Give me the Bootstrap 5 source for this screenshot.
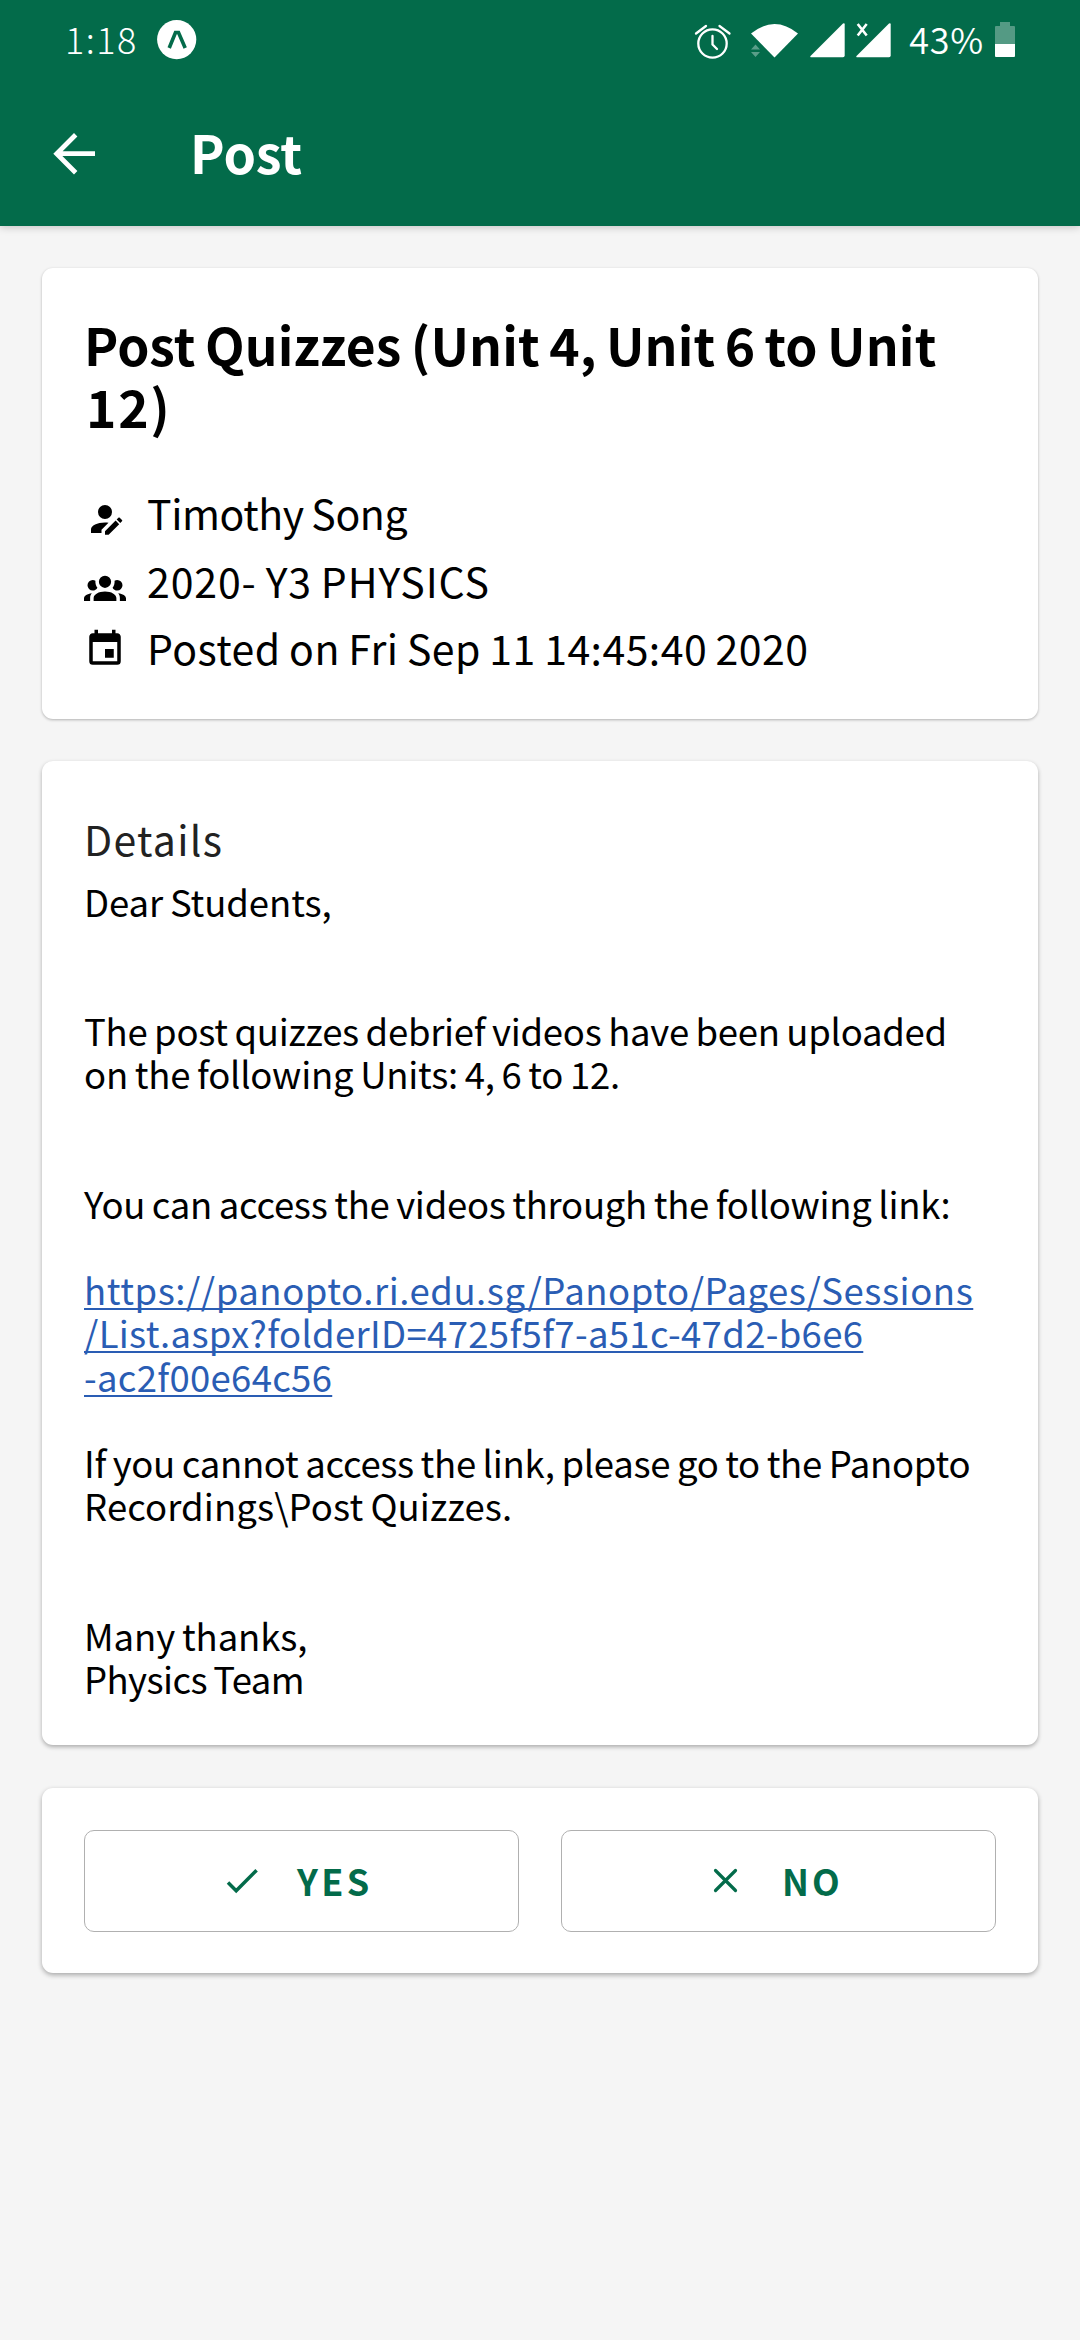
<!DOCTYPE html>
<html lang="en">
<head>
<meta charset="utf-8">
<meta name="viewport" content="width=device-width, initial-scale=1">
<title>Post</title>
<link href="https://cdn.jsdelivr.net/npm/bootstrap@5.3.0/dist/css/bootstrap.min.css" rel="stylesheet">
<style>
body{background:#f5f5f5;color:#000;font-family:"Noto Sans CJK SC","Noto Sans",sans-serif;width:1080px;min-height:2340px}
svg{display:block;flex:none}
.topbar{background:#036b4a;height:226px;box-shadow:0 1px 8px rgba(0,0,0,.22)}
.statusline{height:80px;padding:0 65px 0 65px;font-size:36px;line-height:76px;font-weight:300}
.clock{letter-spacing:1.5px;width:92px}
.charge{letter-spacing:.8px;margin:0 11px 0 17px;font-weight:350}
.titleline{height:146px;padding:0 0 0 53px}
.titleline svg{margin-top:53px}
.app-title{font-size:52px;font-weight:700;line-height:144px;margin:0 0 0 95px;letter-spacing:0}
.page{padding:42px}
.panel{border:0;border-radius:11px;background:#fff;box-shadow:0 1px 3px rgba(0,0,0,.28);padding:0 42px;margin-bottom:42px}
.panel-head{height:451px;padding-top:45px}
.panel-body{height:984px;padding-top:47px;margin-bottom:43px;box-shadow:0 2px 4px rgba(0,0,0,.3)}
.panel-actions{height:185px;padding-top:42px;box-shadow:0 2px 5px rgba(0,0,0,.32)}
.post-title{font-size:51.5px;line-height:62px;font-weight:700;margin:0 0 41px;white-space:nowrap;word-spacing:-2.5px;letter-spacing:.14px}
.title-end{letter-spacing:1.8px;padding-left:2px}
.meta-row{height:67.5px;font-size:41px;line-height:68px;gap:21px;white-space:nowrap;word-spacing:-1.2px}
.meta-row svg{margin-top:20px}
.meta-row:last-child svg{margin-top:15px}
.author{letter-spacing:-.4px}
.group-name{letter-spacing:.9px}
.posted{letter-spacing:.45px}
.details-h{font-size:41px;line-height:60px;font-weight:400;color:#222;margin:0 0 12px;letter-spacing:1.3px}
.message{font-size:36.500px;line-height:43.1px;white-space:pre;word-spacing:-1.2px;letter-spacing:-.28px}
.spaced{letter-spacing:-.1px}
.units{letter-spacing:-.22px}
.folder{letter-spacing:.1px}
.tight{letter-spacing:-.6px}
.msg-link{display:block;color:#2a5db4;word-spacing:0;text-decoration:underline;text-decoration-thickness:2px;text-underline-offset:3px;text-decoration-skip-ink:none;line-height:43px}
.url-a{letter-spacing:.54px}
.url-b{letter-spacing:.32px;margin-bottom:1px}
.url-c{letter-spacing:.3px;margin-bottom:.4px}
.answer-row{gap:42px}
.answer{height:102px;width:435px;flex:none;border:1px solid #b0b0b0;border-radius:10px;background:#fff;color:#036b4a;font-size:36px;font-weight:700;line-height:99px;padding:0}
.answer svg{margin-top:29px}
.answer-yes{padding-left:137px;letter-spacing:3.4px}
.answer-no{padding-left:145px;letter-spacing:3px}
.answer span{margin-left:33px}
</style>
<script src="https://cdn.jsdelivr.net/npm/bootstrap@5.3.0/dist/js/bootstrap.bundle.min.js"></script>
</head>
<body>
<header class="topbar text-white">
  <div class="statusline d-flex">
    <span class="clock">1:18</span>
    <svg width="40" height="80" viewBox="157 0 40 80"><circle cx="176.7" cy="39.6" r="19.6" fill="#fff"/><path d="M169.200 48L175.500 32.500H178.500L185.200 48" fill="none" stroke="#036b4a" stroke-width="3.600"/></svg>
    <svg class="ms-auto" width="198" height="80" viewBox="693 0 198 80" fill="#fff">
      <g fill="none" stroke="#fff" stroke-width="2.300" stroke-linecap="round" stroke-linejoin="round"><circle cx="711.500" cy="43.500" r="14.200"/><path d="M711.500 36V44.500L716 49M695 33.500L705 26M718.500 26L728.500 33.500"/></g>
      <path d="M750 33.500Q773.500 14.500 797 33.500L773.500 57.500Z"/>
      <path d="M750 49.500L754.500 44.500L759 49.500ZM750 52L754.500 57L759 52Z" opacity=".35"/>
      <path d="M809.500 56L842 23.500Q843.700 22.500 843.700 24.500V55.500Q843.700 57.300 842 57.300H810Q808.500 57.300 809.500 56Z"/>
      <path d="M855.500 56L888 23.500Q889.700 22.500 889.700 24.500V55.500Q889.700 57.300 888 57.300H856Q854.500 57.300 855.500 56Z"/>
      <path d="M856.700 24L865.700 35.500M865.700 24L856.700 35.500" fill="none" stroke="#fff" stroke-width="2.600"/>
    </svg>
    <span class="charge">43%</span>
    <svg width="20" height="80" viewBox="0 0 20 80"><path d="M1 26H5V22H15V26H19Q20 26 20 27V44H0V27Q0 26 1 26Z" fill="#fff" opacity=".32"/><path d="M0 44H20V56Q20 57 19 57H1Q0 57 0 56Z" fill="#fff"/></svg>
  </div>
  <div class="titleline d-flex">
    <svg width="42" height="42" viewBox="0 0 42 42" fill="none" stroke="#fff" stroke-width="4.800"><path d="M42 20.700H4M22.700 1.700L3.700 20.700L22.700 39.700"/></svg>
    <h1 class="app-title">Post</h1>
  </div>
</header>
<main class="page">
  <section class="card panel panel-head">
    <h2 class="post-title">Post Quizzes (Unit 4, Unit 6 to Unit<br><span class="title-end">12)</span></h2>
    <div>
      <div class="meta-row d-flex">
        <svg width="42" height="42" viewBox="0 0 24 24"><path d="M21.700 13.350L20.700 14.350L18.650 12.300L19.650 11.300C19.860 11.080 20.210 11.080 20.420 11.300L21.700 12.580C21.910 12.790 21.910 13.140 21.700 13.350M12 18.940L18.070 12.880L20.120 14.930L14.060 21H12V18.940M12 14C7.580 14 4 15.790 4 18V20H10V18.110L14 14.110C13.340 14.030 12.670 14 12 14M12 4A4 4 0 0 0 8 8A4 4 0 0 0 12 12A4 4 0 0 0 16 8A4 4 0 0 0 12 4Z"/></svg>
        <span class="author">Timothy Song</span>
      </div>
      <div class="meta-row d-flex">
        <svg width="42" height="42" viewBox="0 0 24 24"><path d="M12 5.500A3.500 3.500 0 0 1 15.500 9A3.500 3.500 0 0 1 12 12.500A3.500 3.500 0 0 1 8.500 9A3.500 3.500 0 0 1 12 5.500M5 8C5.560 8 6.080 8.150 6.530 8.420C6.380 9.850 6.800 11.270 7.660 12.380C7.160 13.340 6.160 14 5 14A3 3 0 0 1 2 11A3 3 0 0 1 5 8M19 8A3 3 0 0 1 22 11A3 3 0 0 1 19 14C17.840 14 16.840 13.340 16.340 12.380C17.200 11.270 17.620 9.850 17.470 8.420C17.920 8.150 18.440 8 19 8M5.500 18.250C5.500 16.180 8.410 14.500 12 14.500C15.590 14.500 18.500 16.180 18.500 18.250V20H5.500V18.250M0 20V18.500C0 17.110 1.890 15.940 4.450 15.600C3.860 16.280 3.500 17.220 3.500 18.250V20H0M24 20H20.500V18.250C20.500 17.220 20.140 16.280 19.550 15.600C22.110 15.940 24 17.110 24 18.500V20Z"/></svg>
        <span class="group-name">2020- Y3 PHYSICS</span>
      </div>
      <div class="meta-row d-flex">
        <svg width="42" height="42" viewBox="0 0 24 24"><path d="M19 19H5V8H19M16 1V3H8V1H6V3H5C3.890 3 3 3.890 3 5V19A2 2 0 0 0 5 21H19A2 2 0 0 0 21 19V5C21 3.890 20.100 3 19 3H18V1M17 12H12V17H17V12Z"/></svg>
        <span class="posted">Posted on Fri Sep 11 14:45:40 2020</span>
      </div>
    </div>
  </section>
  <section class="card panel panel-body">
    <h3 class="details-h">Details</h3>
    <div class="message"><span class="spaced">Dear Students,</span>


The post quizzes debrief videos have been uploaded
<span class="units">on the following Units: 4, 6 to 12.</span>


You can access the videos through the following link:

<a class="msg-link url-a" href="#">https://panopto.ri.edu.sg/Panopto/Pages/Sessions</a><a class="msg-link url-b" href="#">/List.aspx?folderID=4725f5f7-a51c-47d2-b6e6</a><a class="msg-link url-c" href="#">-ac2f00e64c56</a>
If you cannot access the link, please go to the Panopto
<span class="folder">Recordings\Post Quizzes.</span>


<span class="spaced">Many thanks,</span>
<span class="tight">Physics Team</span></div>
  </section>
  <section class="card panel panel-actions">
    <div class="answer-row d-flex">
      <button type="button" class="btn answer answer-yes d-flex">
        <svg width="42" height="42" viewBox="0 0 42 42" fill="none" stroke="#036b4a" stroke-width="3.500"><path d="M6 22.500L14.200 30.700L34.600 10.300"/></svg>
        <span>YES</span>
      </button>
      <button type="button" class="btn answer answer-no d-flex">
        <svg width="42" height="42" viewBox="0 0 42 42" fill="none" stroke="#036b4a" stroke-width="3.200" stroke-linecap="round"><path d="M8.500 10.500L28.500 30.500M28.500 10.500L8.500 30.500"/></svg>
        <span>NO</span>
      </button>
    </div>
  </section>
</main>
</body>
</html>
